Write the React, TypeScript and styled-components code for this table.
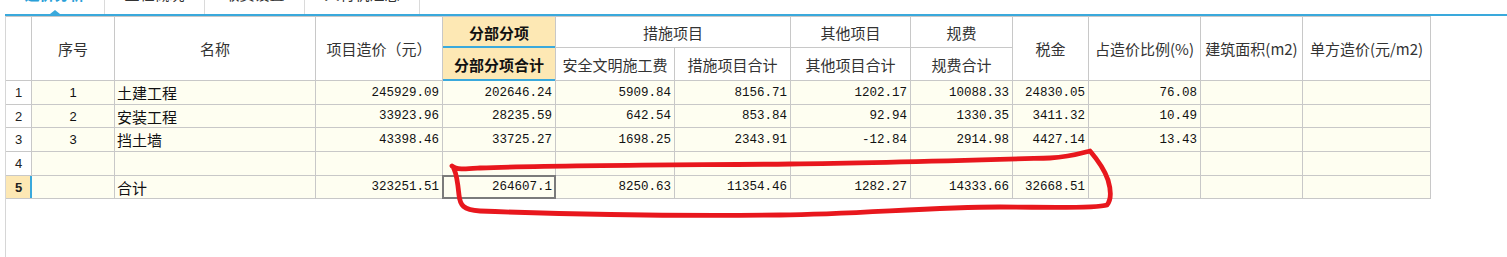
import React from 'react';
import styled, { createGlobalStyle } from 'styled-components';

type cellKind = 'num' | 'text' | 'index' | 'empty';

const tabs = [
  { label: '造价分析', width: 100, active: true },
  { label: '工程概况', width: 100 },
  { label: '取费设置', width: 100 },
  { label: '人材机汇总', width: 115 }
];

// 每一行: 行号, 序号, 名称, 项目造价, 分部分项合计, 安全文明施工费, 措施项目合计, 其他项目合计, 规费合计, 税金, 占比, 面积, 单方
const rows: string[][] = [
  ['1', '1', '土建工程', '245929.09', '202646.24', '5909.84', '8156.71', '1202.17', '10088.33', '24830.05', '76.08', '', ''],
  ['2', '2', '安装工程', '33923.96', '28235.59', '642.54', '853.84', '92.94', '1330.35', '3411.32', '10.49', '', ''],
  ['3', '3', '挡土墙', '43398.46', '33725.27', '1698.25', '2343.91', '-12.84', '2914.98', '4427.14', '13.43', '', ''],
  ['4', '', '', '', '', '', '', '', '', '', '', '', ''],
  ['5', '', '合计', '323251.51', '264607.1', '8250.63', '11354.46', '1282.27', '14333.66', '32668.51', '', '', '']
];

const kindOf = (col: number, value: string): cellKind => {
  if (value === '') return 'empty';
  if (col === 1) return 'index';
  if (col === 2) return 'text';
  return 'num';
};

const App: React.FC = () => {
  return (
    <Page>
      <GlobalStyle />
      <TabBar>
        {tabs.map(t => (
          <Tab key={t.label} $w={t.width}>
            <TabLabel $active={t.active}>{t.label}</TabLabel>
            {t.active && <Caret />}
          </Tab>
        ))}
      </TabBar>
      <BlueBar />
      <Body>
        <Grid>
          <HeadCell $rows={2} />
          <HeadCell $rows={2}>序号</HeadCell>
          <HeadCell $rows={2}>名称</HeadCell>
          <HeadCell $rows={2}>项目造价（元）</HeadCell>
          <HeadCell $hl>分部分项</HeadCell>
          <HeadCell $cols={2}>措施项目</HeadCell>
          <HeadCell>其他项目</HeadCell>
          <HeadCell>规费</HeadCell>
          <HeadCell $rows={2}>税金</HeadCell>
          <HeadCell $rows={2}>占造价比例(%)</HeadCell>
          <HeadCell $rows={2}>建筑面积(m2)</HeadCell>
          <HeadCell $rows={2}>单方造价(元/m2)</HeadCell>
          <HeadCell $hl>分部分项合计</HeadCell>
          <HeadCell>安全文明施工费</HeadCell>
          <HeadCell>措施项目合计</HeadCell>
          <HeadCell>其他项目合计</HeadCell>
          <HeadCell>规费合计</HeadCell>
          {rows.map((r, ri) => (
            <React.Fragment key={ri}>
              <RowNum $current={ri === 4}>{r[0]}</RowNum>
              {r.slice(1).map((v, ci) => (
                <Cell key={ci} $kind={kindOf(ci + 1, v)} $selected={ri === 4 && ci === 3}>
                  {v}
                </Cell>
              ))}
            </React.Fragment>
          ))}
        </Grid>
      </Body>
      <Scribble viewBox="0 0 1507 257">
        <path
          d="M452 166 C456 170 466 169 480 168 C560 165 700 165 790 164 C880 163 980 160 1050 158 C1070 157 1082 153 1090 151 C1096 158 1104 168 1108 180 C1111 190 1111 200 1107 205 C1095 209 1040 207 1000 207 C930 207 860 214 780 215 C680 216 560 214 480 211 C463 210 460 205 459 195 C458 185 457 175 454 169"
          fill="none"
          stroke="#e8171d"
          strokeWidth={4.8}
          strokeLinecap="round"
          strokeLinejoin="round"
        />
      </Scribble>
    </Page>
  );
};

const GlobalStyle = createGlobalStyle`
html, body {
  margin: 0;
  padding: 0;
  background: #fff;
}
body {
  font-family: "Noto Sans CJK SC", "Liberation Sans", sans-serif;
}
`;

const Page = styled.div`
position: relative;
width: 1507px;
height: 257px;
overflow: hidden;
background: #fff;
`;

const TabBar = styled.div`
display: flex;
height: 14px;
padding-left: 5px;
`;

const Tab = styled.div<{ $w: number }>`
position: relative;
flex: none;
width: ${p => p.$w}px;
box-sizing: border-box;
border-right: 1px solid #dadada;
display: flex;
justify-content: center;
align-items: flex-start;
overflow: hidden;
`;

const TabLabel = styled.span<{ $active?: boolean }>`
margin-top: -14px;
font-size: 15px;
line-height: 15px;
font-weight: ${p => (p.$active ? 700 : 400)};
color: ${p => (p.$active ? '#2a9fd8' : '#333')};
white-space: nowrap;
`;

const Caret = styled.div`
position: absolute;
left: 50%;
bottom: 0;
margin-left: -5px;
width: 0;
height: 0;
border-left: 5px solid transparent;
border-right: 5px solid transparent;
border-bottom: 4px solid #3aa9dc;
`;

const BlueBar = styled.div`
margin-left: 5px;
height: 2px;
background: #3aa9dc;
`;

const Body = styled.div`
margin-left: 5px;
height: 241px;
border-left: 1px solid #d6d6d6;
`;

const Grid = styled.div`
display: inline-grid;
grid-template-columns: 25px 82px 200px 126px 112px 118px 115px 119px 101px 75px 111px 101px 127px;
grid-template-rows: 30px 32px 23px 22px 23px 23px 22px;
gap: 1px;
padding: 1px 1px 1px 0;
background: #c8c8c8;
`;

const HeadCell = styled.div<{ $rows?: number; $cols?: number; $hl?: boolean }>`
grid-row: span ${p => p.$rows || 1};
grid-column: span ${p => p.$cols || 1};
display: flex;
align-items: center;
justify-content: center;
font-size: 15px;
white-space: nowrap;
color: ${p => (p.$hl ? '#111' : '#333')};
font-weight: ${p => (p.$hl ? 700 : 400)};
background: ${p => (p.$hl ? '#fde8b4' : '#fff')};
box-shadow: ${p => (p.$hl ? 'inset 0 -1px 0 #3aa9dc, 0 1px 0 #3aa9dc' : 'none')};
`;

const RowNum = styled.div<{ $current?: boolean }>`
display: flex;
align-items: center;
justify-content: center;
font-family: "Liberation Sans", sans-serif;
font-size: 13px;
color: #222;
font-weight: ${p => (p.$current ? 700 : 400)};
background: ${p => (p.$current ? '#fde8b4' : '#fff')};
box-shadow: ${p => (p.$current ? 'inset -1px 0 0 #3aa9dc, 1px 0 0 #3aa9dc' : 'none')};
`;

const Cell = styled.div<{ $kind: cellKind; $selected?: boolean }>`
display: flex;
align-items: center;
justify-content: ${p => (p.$kind === 'num' ? 'flex-end' : p.$kind === 'index' ? 'center' : 'flex-start')};
padding: ${p => (p.$kind === 'num' ? '0 3px 0 0' : p.$kind === 'text' ? '0 0 0 2px' : '0')};
background: #fefef1;
color: #111;
white-space: nowrap;
font-family: ${p =>
    p.$kind === 'num'
      ? '"Liberation Mono", monospace'
      : p.$kind === 'index'
        ? '"Liberation Sans", sans-serif'
        : '"Noto Sans CJK SC", sans-serif'};
font-size: ${p => (p.$kind === 'num' ? '12.5px' : p.$kind === 'index' ? '13px' : '15px')};
box-shadow: ${p => (p.$selected ? 'inset 0 0 0 1px #7b7b7b, 0 0 0 1px #7b7b7b' : 'none')};
`;

const Scribble = styled.svg`
position: absolute;
left: 0;
top: 0;
width: 1507px;
height: 257px;
pointer-events: none;
`;

export default App;
